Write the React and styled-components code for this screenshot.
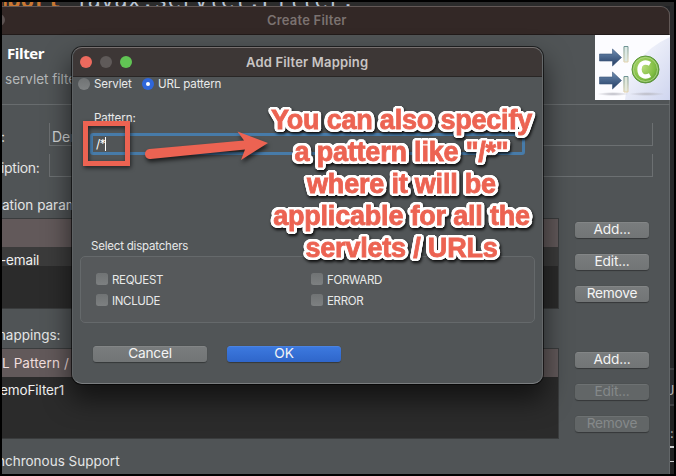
import React from "react";
import styled, { createGlobalStyle, css } from "styled-components";

const Global = createGlobalStyle`
  *, *::before, *::after { box-sizing: border-box; }
  html, body { margin: 0; padding: 0; background: #000; }
  body { width: 676px; height: 476px; overflow: hidden; font-family: Inter, "Liberation Sans", sans-serif; }
`;

const Desktop = styled.main`
  position: relative;
  width: 676px;
  height: 476px;
  overflow: hidden;
  border: 2px solid #000;
  background: #222325;
  display: grid;
  grid-template-rows: 4px 468px;
  grid-template-columns: 668px 4px;
`;

const CodeLine = styled.div`
  grid-column: 1 / 3;
  height: 4px;
  overflow: hidden;
  display: flex;
  align-items: flex-end;
  white-space: pre;
  background: #2b2b2b;
  font: 22.2px/26px "DejaVu Sans Mono", monospace;
  color: #b9c4d2;
  span { height: 26px; margin-left: -8px; margin-bottom: -7px; flex: none; }
  b { font-weight: 700; color: #cb7832; }
`;

const EdgeStrip = styled.div`
  overflow: hidden;
  display: flex;
  flex-direction: column;
  background: linear-gradient(#28292a 0 362px, #404143 362px 364px, #2b2c2e 364px 398px, #404143 398px 400px, #222 400px);
  color: #b5b5b5;
  font-size: 13px;
  line-height: 16px;
`;
const EdgeGlyph = styled.span`
  margin-top: ${(p) => p.$gap}px;
  height: 16px;
  margin-left: ${(p) => p.$shift || 0}px;
`;
const EdgeRule = styled.i`
  height: 1.5px;
  margin-top: ${(p) => p.$gap}px;
  background: #ccc;
  flex: none;
`;

const Window = styled.section`
  display: flex;
  flex-direction: column;
  overflow: hidden;
  border-radius: 0 9px 0 0;
  background: linear-gradient(to left, #626668 1px, #505456 1px);
  color: #e4e5e5;
`;

const WindowBar = styled.header`
  height: 29px;
  flex: none;
  display: flex;
  align-items: center;
  padding-bottom: 2px;
  border: solid #625856;
  border-width: 1px 1px 1px 0;
  border-bottom-color: #221b1a;
  background: #332826;
  border-radius: 0 9px 0 0;
`;
const DimLight = styled.i`
  width: 12px;
  height: 12px;
  border-radius: 50%;
  background: #5c5352;
  margin-left: -9px;
`;
const WindowTitle = styled.h1`
  margin: 0 0 0 262px;
  font-size: 13px;
  line-height: 18px;
  font-weight: 600;
  color: #7b7270;
  white-space: nowrap;
  letter-spacing: 0.2px;
`;

const Banner = styled.div`
  height: 70px;
  flex: none;
  display: flex;
  justify-content: space-between;
  align-items: flex-start;
  border-bottom: 1px solid #686c6e;
`;
const BannerText = styled.div`
  padding: 8px 0 0 5px;
  h2 { margin: 0; font: 700 15px/20px "Open Sans", sans-serif; letter-spacing: -0.4px; color: #fff; }
  p { margin: 7px 0 0 -2px; font-size: 13.5px; line-height: 18px; color: #b5b8b9; white-space: nowrap; }
`;

const Field = styled.div`
  display: flex;
  flex: none;
  height: 23px;
  margin-top: ${(p) => p.$gap}px;
  font-size: 14px;
  line-height: 27px;
  white-space: nowrap;
`;
const FieldLabel = styled.label`
  width: 47px;
  flex: none;
  text-indent: -1px;
  letter-spacing: -0.3px;
`;
const FieldBox = styled.div`
  width: 604px;
  padding-left: 2px;
  border: solid #6c7072;
  border-width: 0 1px 1px;
  color: #d2d4d4;
`;

const SectionLabel = styled.div`
  height: 20px;
  flex: none;
  margin-top: ${(p) => p.$gap}px;
  line-height: 20px;
  font-size: 13.5px;
  letter-spacing: ${(p) => p.$track || 0}px;
  margin-left: ${(p) => p.$shift || 0}px;
  white-space: nowrap;
`;
const TableArea = styled.div`
  height: 91px;
  flex: none;
  display: flex;
  margin-top: 3px;
`;
const Table = styled.div`
  width: 557px;
  height: 91px;
  overflow: hidden;
  border: 1px solid #3a3c3d;
  border-left: 0;
  background: #2b2b2b;
`;
const TableRow = styled.div`
  height: ${(p) => p.$h}px;
  line-height: ${(p) => p.$line || p.$h}px;
  text-indent: ${(p) => p.$indent || 0}px;
  font-size: 13.5px;
  letter-spacing: ${(p) => p.$track || 0}px;
  white-space: nowrap;
  background: ${(p) => (p.$kind === "head" ? "#62595a" : p.$kind === "alt" ? "#3b3b3b" : "#2b2b2b")};
  color: ${(p) => (p.$kind === "head" ? "#f1dedd" : "#f0f0f0")};
`;
const Actions = styled.div`
  display: flex;
  flex-direction: column;
  gap: 16px;
  padding: ${(p) => p.$top}px 0 0 16px;
`;

const Button = styled.button`
  width: ${(p) => p.$w || 74}px;
  height: 16px;
  flex: none;
  display: flex;
  justify-content: center;
  align-items: flex-start;
  padding: 0;
  border: 0;
  border-radius: 3.5px;
  font: 13.7px/14px Inter, sans-serif;
  letter-spacing: -0.2px;
  color: #f4f4f4;
  background: linear-gradient(#7a7d7e, #727576);
  box-shadow: 0 0.5px 1px rgba(0, 0, 0, 0.35), inset 0 0.5px 0 rgba(255, 255, 255, 0.15);
  ${(p) => p.$primary && css`background: linear-gradient(#3d7ae0, #2f66ca);`}
  &:disabled { color: #85898a; background: #626667; }
`;

const Dialog = styled.section`
  position: absolute;
  left: 70px;
  top: 45px;
  width: 471px;
  height: 337px;
  overflow: hidden;
  border: 1px solid #707375;
  border-color: #77706f #66696b #7b7e80 #5d6163;
  border-radius: 10px;
  background: #515557;
  color: #e8e9e9;
  display: flex;
  flex-direction: column;
`;
const Shadow = styled.div`
  position: absolute;
  left: 70px;
  top: 45px;
  width: 471px;
  height: 337px;
  border-radius: 10px;
  box-shadow: 0 0 0 1px rgba(0, 0, 0, 0.6), 0 14px 26px 2px rgba(0, 0, 0, 0.55);
`;
const DialogBar = styled.header`
  height: 29px;
  flex: none;
  display: flex;
  align-items: center;
  padding-left: 7px;
  gap: 8px;
  background: #3d3736;
  border-bottom: 1px solid #292625;
`;
const Light = styled.i`
  width: 12px;
  height: 12px;
  border-radius: 50%;
  background: ${(p) => p.$c};
`;
const DialogTitle = styled.h2`
  margin: 0 0 0 106px;
  font-size: 13px;
  line-height: 18px;
  font-weight: 600;
  color: #c9c5c4;
  letter-spacing: 0.17px;
  white-space: nowrap;
`;
const Choices = styled.div`
  display: flex;
  height: 14px;
  flex: none;
  padding-left: 5px;
`;
const Choice = styled.label`
  display: flex;
  align-items: center;
  gap: 4px;
  width: 64px;
  flex: none;
  font-size: 11.6px;
  letter-spacing: -0.15px;
  line-height: 14px;
  white-space: nowrap;
`;
const Radio = styled.i`
  width: 12px;
  height: 12px;
  flex: none;
  border-radius: 50%;
  display: grid;
  place-items: center;
  background: ${(p) => (p.$on ? "#2f67db" : "linear-gradient(#707374, #7f8283)")};
  &::after {
    content: "";
    width: 4.5px;
    height: 4.5px;
    border-radius: 50%;
    background: ${(p) => (p.$on ? "#fff" : "transparent")};
  }
`;
const PatternLabel = styled.label`
  margin: 19px 0 0 21px;
  height: 16px;
  font-size: 11.6px;
  letter-spacing: -0.12px;
  line-height: 16px;
`;
const PatternInput = styled.div`
  margin: 7px 0 0 17px;
  width: 435px;
  height: 22px;
  flex: none;
  display: flex;
  align-items: center;
  padding-left: 3px;
  border: 3px solid #477ba9;
  border-radius: 3px;
  font-size: 12px;
  letter-spacing: -0.6px;
  line-height: 16px;
  color: #fff;
`;
const Caret = styled.i`
  width: 1px;
  height: 14px;
  background: #fff;
`;
const GroupTitle = styled.div`
  margin: 83px 0 0 18px;
  height: 16px;
  font-size: 11.5px;
  letter-spacing: -0.2px;
  line-height: 16px;
`;
const Group = styled.div`
  margin: 2px 0 0 7px;
  width: 455px;
  height: 67px;
  flex: none;
  display: grid;
  grid-template-columns: 215px 200px;
  grid-template-rows: 21px 21px;
  padding: 12px 0 0 15px;
  border: 1px solid #65696b;
  border-radius: 5px;
  background: #56595b;
`;
const CheckItem = styled.label`
  display: flex;
  align-items: center;
  gap: 4px;
  font-size: 11.5px;
  letter-spacing: -0.33px;
`;
const Box = styled.i`
  width: 12px;
  height: 12px;
  margin-top: -2px;
  border-radius: 2.5px;
  background: linear-gradient(#707374, #7d8081);
`;
const DialogActions = styled.div`
  display: flex;
  gap: 20px;
  padding: 23px 0 0 20px;
`;

const Highlight = styled.div`
  position: absolute;
  left: 81px;
  top: 119px;
  width: 47px;
  height: 45px;
  border: 5px solid #ec6352;
  filter: drop-shadow(1px 2px 2px rgba(0, 0, 0, 0.6));
`;
const Arrow = styled.svg`
  position: absolute;
  left: 138px;
  top: 120px;
  width: 140px;
  height: 50px;
  filter: drop-shadow(1px 3px 2px rgba(0, 0, 0, 0.65));
`;

const outline = Array.from({ length: 24 }, (_, i) => {
  const a = (i / 24) * Math.PI * 2;
  return `${(Math.cos(a) * 3.4).toFixed(2)}px ${(Math.sin(a) * 3.4).toFixed(2)}px 0 #fff`;
})
  .concat(["1.5px 1.5px 0 #fff", "-1.5px 1.5px 0 #fff", "1.5px -1.5px 0 #fff", "-1.5px -1.5px 0 #fff"])
  .join(", ");

const Note = styled.p`
  position: absolute;
  left: 239.5px;
  top: 102px;
  width: 320px;
  margin: 0;
  text-align: center;
  white-space: pre-line;
  font: 700 27px/32px "Liberation Sans", Arial, sans-serif;
  letter-spacing: -0.2px;
  color: #ec6352;
  -webkit-text-stroke: 0.8px #ec6352;
  text-shadow: ${outline};
  filter: drop-shadow(1px 2px 1.5px rgba(0, 0, 0, 0.85));
`;

const FilterArt = () => (
  <svg width="75" height="65" viewBox="0 0 75 65">
    <defs>
      <linearGradient id="sky" x1="0" y1="0" x2="1" y2="1"><stop offset="0" stopColor="#fff" /><stop offset="1" stopColor="#cfd5ef" /></linearGradient>
      <linearGradient id="steel" x1="0" y1="0" x2="0" y2="1"><stop offset="0" stopColor="#6d8cb2" /><stop offset="1" stopColor="#243d63" /></linearGradient>
      <linearGradient id="gate" x1="0" y1="0" x2="0" y2="1"><stop offset="0" stopColor="#6f9494" /><stop offset="1" stopColor="#e5d3ad" /></linearGradient>
      <radialGradient id="leaf" cx=".4" cy=".4" r=".65"><stop offset="0" stopColor="#b7dc78" /><stop offset=".7" stopColor="#7fbd42" /><stop offset="1" stopColor="#5c9837" /></radialGradient>
      <radialGradient id="ground"><stop offset="0" stopColor="#b9b9c2" /><stop offset="1" stopColor="#b9b9c2" stopOpacity="0" /></radialGradient>
    </defs>
    <path d="M0 0H75V65H0Z" fill="#fcfcff" />
    <path d="M30 65Q33 21 75 2V65Z" fill="url(#sky)" />
    <ellipse cx="18" cy="59" rx="16" ry="2" fill="url(#ground)" />
    <ellipse cx="52" cy="59" rx="18" ry="2" fill="url(#ground)" />
    {[22.5, 45.5].map((y) => (
      <path key={y} d={`M4.5 ${y - 3.5}H17.5V${y - 8.5}L26.5 ${y}L17.5 ${y + 8.5}V${y + 3.5}H4.5Z`} fill="url(#steel)" stroke="#3b5579" strokeWidth=".6" />
    ))}
    <path d="M28.5 12H33V27H28.5Z" fill="#dce9e4" /><path d="M29 11.5H33V27H29Z" fill="none" stroke="url(#gate)" strokeWidth="1" />
    <path d="M28.5 42H33V57H28.5Z" fill="#e2e8db" /><path d="M29 41.5H33V57H29Z" fill="none" stroke="url(#gate)" strokeWidth="1" />
    <circle cx="50.5" cy="34.5" r="13.5" fill="url(#leaf)" stroke="#5b933c" strokeWidth="1" />
    <circle cx="50.5" cy="34.5" r="12" fill="none" stroke="#b2d78a" strokeWidth=".9" />
    <path d="M55 28.8C50 26 44.5 28 44.5 34.5S50 43 55 40.2" fill="none" stroke="#fff" strokeWidth="4.3" />
  </svg>
);

export default function App() {
  return (
    <>
      <Global />
      <Desktop>
        <CodeLine><span><b>mport</b> javax.servlet.Filter;</span></CodeLine>
        <Window>
          <WindowBar>
            <DimLight />
            <WindowTitle>Create Filter</WindowTitle>
          </WindowBar>
          <Banner>
            <BannerText>
              <h2>Filter</h2>
              <p>servlet filter</p>
            </BannerText>
            <FilterArt />
          </Banner>
          <Field $gap={18}><FieldLabel>:</FieldLabel><FieldBox>DemoFilter</FieldBox></Field>
          <Field $gap={8}><FieldLabel>iption:</FieldLabel><FieldBox /></Field>
          <SectionLabel $gap={18}>ation parameters:</SectionLabel>
          <TableArea>
            <Table>
              <TableRow $kind="head" $h={28} />
              <TableRow $kind="alt" $h={19} $line={26} $indent={-2} $track={-0.15}>-email</TableRow>
            </Table>
            <Actions $top={4}>
              <Button>Add...</Button>
              <Button>Edit...</Button>
              <Button>Remove</Button>
            </Actions>
          </TableArea>
          <SectionLabel $gap={16} $shift={-8}>mappings:</SectionLabel>
          <TableArea>
            <Table>
              <TableRow $kind="head" $h={28} $track={0.1}>L Pattern /</TableRow>
              <TableRow $h={26} $line={27} $indent={-2} $track={-0.1}>emoFilter1</TableRow>
            </Table>
            <Actions $top={4}>
              <Button>Add...</Button>
              <Button disabled>Edit...</Button>
              <Button disabled>Remove</Button>
            </Actions>
          </TableArea>
          <SectionLabel $gap={12} $shift={-5}>nchronous Support</SectionLabel>
        </Window>
        <EdgeStrip>
          <EdgeGlyph $gap={376} $shift={-3}>J</EdgeGlyph>
          <EdgeGlyph $gap={27}>:</EdgeGlyph>
          <EdgeRule $gap={5} />
          <EdgeRule $gap={13} />
        </EdgeStrip>
        <Shadow />
        <Dialog>
          <DialogBar>
            <Light $c="#ed6a5e" />
            <Light $c="#5f5a59" />
            <Light $c="#61c454" />
            <DialogTitle>Add Filter Mapping</DialogTitle>
          </DialogBar>
          <Choices>
            <Choice><Radio />Servlet</Choice>
            <Choice><Radio $on />URL pattern</Choice>
          </Choices>
          <PatternLabel>Pattern:</PatternLabel>
          <PatternInput>/*<Caret /></PatternInput>
          <GroupTitle>Select dispatchers</GroupTitle>
          <Group>
            <CheckItem><Box />REQUEST</CheckItem>
            <CheckItem><Box />FORWARD</CheckItem>
            <CheckItem><Box />INCLUDE</CheckItem>
            <CheckItem><Box />ERROR</CheckItem>
          </Group>
          <DialogActions>
            <Button $w={114}>Cancel</Button>
            <Button $w={114} $primary>OK</Button>
          </DialogActions>
        </Dialog>
        <Highlight />
        <Arrow viewBox="0 0 140 50">
          <path d="M9.5 27 L104 18.5 L97.5 9.5 L128 21 L101 38 L105 27.5 L10.5 37 A5 5 0 0 1 9.5 27Z" fill="#ec6352" />
        </Arrow>
        <Note>{"You can also specify\na pattern like \"/*\"\nwhere it will be\napplicable for all the\nservlets / URLs"}</Note>
      </Desktop>
    </>
  );
}
